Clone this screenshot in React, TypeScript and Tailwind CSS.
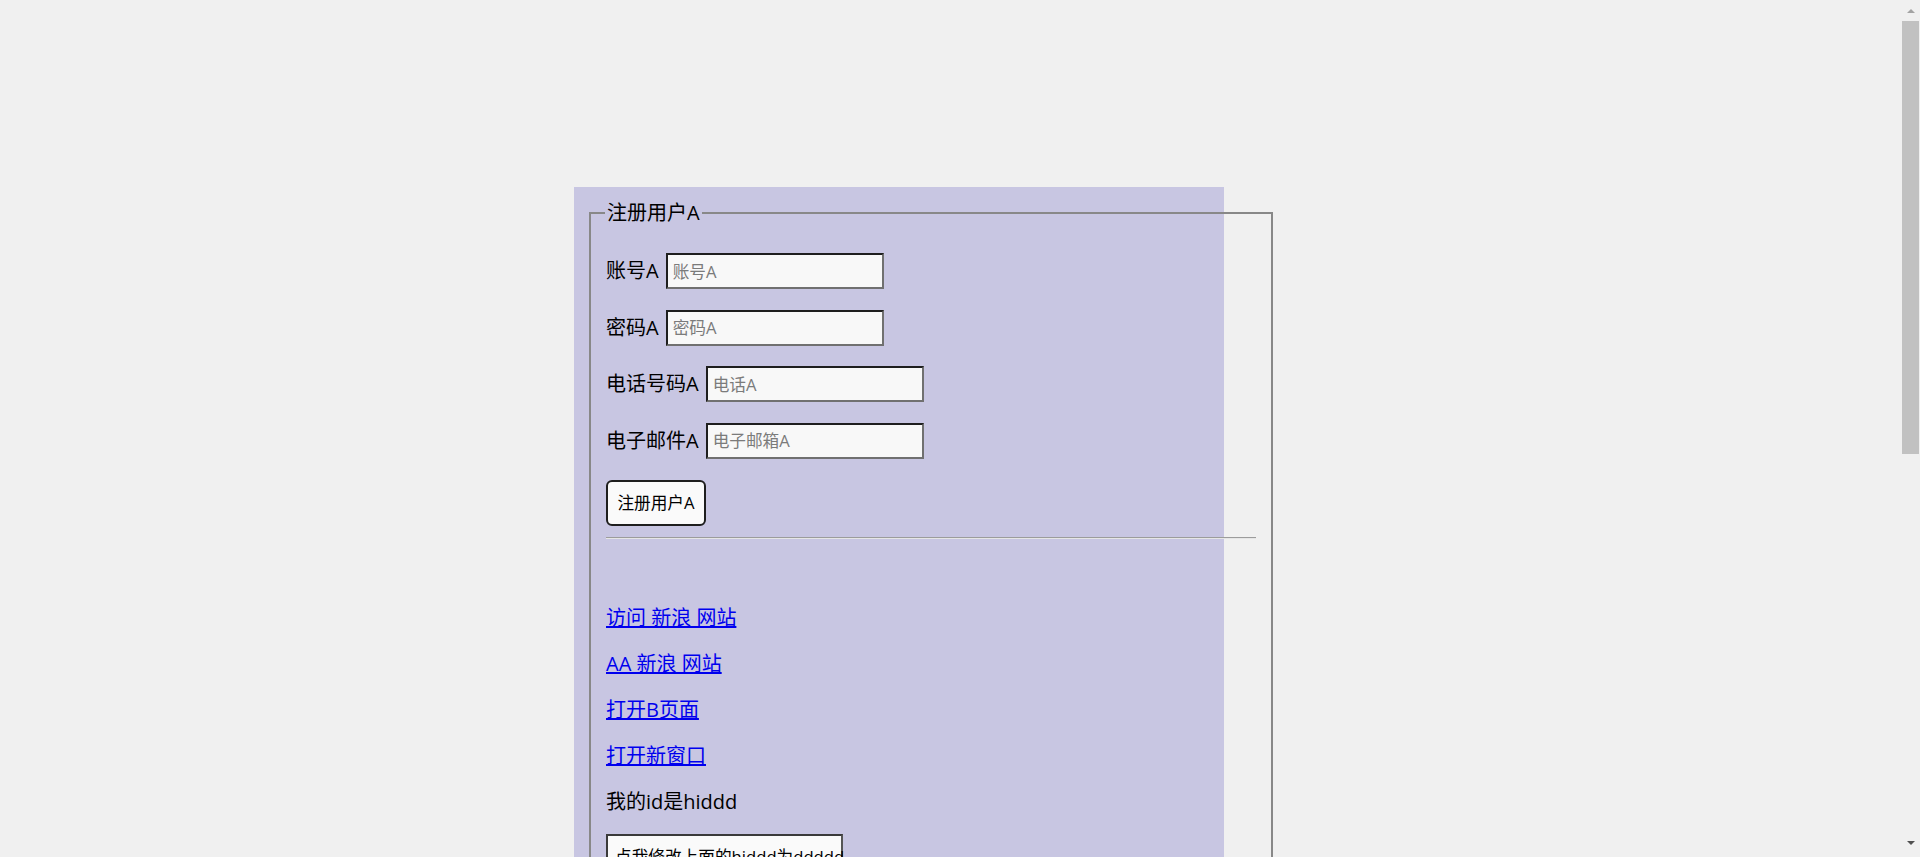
import React from 'react';

const fields = [
  { label: '电话号码A', placeholder: '电话A' },
  { label: '电子邮件A', placeholder: '电子邮箱A' },
];

const inputCls =
  'h-[36px] w-[218px] border-2 border-t-[#1e1e1e] border-l-[#1e1e1e] border-b-[#707070] border-r-[#707070] bg-[#f8f8f8] px-[5px] text-[16.67px] text-black outline-none placeholder:text-[#7b7b7b]';

const links = ['访问 新浪 网站', 'AA 新浪 网站', '打开B页面', '打开新窗口'];

// browser scrollbar as it appears in the screenshot
const ScrollBar: React.FC = () => (
  <div className="fixed top-0 right-0 flex h-screen w-[20px] flex-col items-center bg-[#f0f0f0] pl-[1px]">
    <svg width="10" height="17" viewBox="0 0 10 17" className="mt-[1px] shrink-0">
      <path d="M1 12 L5 8 L9 12 Z" fill="#a3a3a3" />
    </svg>
    <div className="mt-[3px] h-[433px] w-[17px] bg-[#c1c1c1]" />
    <div className="flex-1" />
    <svg width="10" height="17" viewBox="0 0 10 17" className="mb-[4px] shrink-0">
      <path d="M1 5 L9 5 L5 9 Z" fill="#505050" />
    </svg>
  </div>
);

const App: React.FC = () => {
  return (
    <div
      className="bg-[#f0f0f0] pt-[187px] pb-[20px] text-black"
      style={{ fontFamily: '"Open Sans", "Noto Sans CJK SC", sans-serif' }}
    >
      <div className="ml-[574px] min-h-[1423px] w-[650px] bg-[#c8c6e2] pt-[13px] pl-[15px]">
        <fieldset className="w-[684px] border-2 border-[#888888] px-[15px] pb-[40px]">
          <legend className="-ml-[1px] px-[2px] text-[20px] leading-[26px]">注册用户A</legend>

          <div className="mt-[27px] flex flex-col gap-[20.67px]">
            <div className="flex h-[36px] items-center gap-[7px]">
              <span className="text-[20px] leading-[26px]">账号A</span>
              <input className={inputCls} placeholder="账号A" />
            </div>
            <div className="flex h-[36px] items-center gap-[7px]">
              <span className="text-[20px] leading-[26px]">密码A</span>
              <input type="password" className={inputCls} placeholder="密码A" />
            </div>
            {fields.map((f) => (
              <div key={f.label} className="flex h-[36px] items-center gap-[7px]">
                <span className="text-[20px] leading-[26px]">{f.label}</span>
                <input className={inputCls} placeholder={f.placeholder} />
              </div>
            ))}
            <div>
              <button className="h-[46px] w-[100px] rounded-[6px] border-2 border-[#1e1e1e] bg-[#fafafa] text-[16.67px] leading-[20px]">
                注册用户A
              </button>
            </div>
          </div>

          <hr className="mt-[11px] h-0 border-t border-b border-t-[#9c9c9c] border-b-[#e6e6e6]" />

          <div className="mt-[66px] flex flex-col gap-[20px]">
            {links.map((l) => (
              <a key={l} href="#" className="w-fit text-[20px] leading-[26px] text-[#0000ee] underline">
                {l}
              </a>
            ))}
            <p className="text-[20px] leading-[26px]">我的id是hiddd</p>
          </div>

          <button className="mt-[19px] h-[46px] w-[237px] whitespace-nowrap border-2 border-t-[#3a3a3a] border-l-[#3a3a3a] border-b-[#555555] border-r-[#555555] bg-[#fafafa] px-[7px] text-[16.67px] leading-[20px]">
            点我修改上面的hiddd为ddddd
          </button>
        </fieldset>
      </div>
      <ScrollBar />
    </div>
  );
};

export default App;
